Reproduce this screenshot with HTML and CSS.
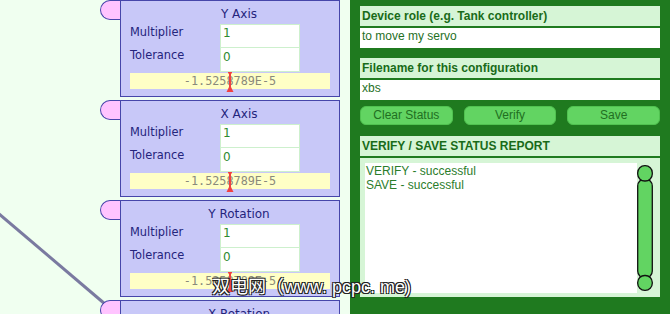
FILE: index.html
```html
<!DOCTYPE html>
<html>
	<head>
		<meta charset="utf-8">
		<title>Servo config</title>
		<link rel="stylesheet" href="styles.css">
	</head>
	<body>
		<div class="page">
			<div class="canvas">
				<svg class="wire" width="350" height="314"><line x1="-2" y1="213" x2="105" y2="304" stroke="#7a7aa0" stroke-width="3"/></svg>
				<div class="node">
					<div class="tab"></div>
					<div class="box">
						<div class="title">Y Axis</div>
						<div class="rows">
							<span class="lbl">Multiplier</span><div class="val">1</div>
							<span class="lbl lbl2">Tolerance</span><div class="val val2">0</div>
						</div>
						<div class="reading">-1.5258789E-5<svg class="marker" width="8" height="20"><rect x="2" y="0" width="4" height="1.5" fill="#f04040"/><rect x="3" y="0" width="2" height="19" fill="#f04040"/><polygon points="0.5,20 7.5,20 4,13" fill="#f04040"/></svg></div>
					</div>
				</div>
				<div class="node">
					<div class="tab"></div>
					<div class="box">
						<div class="title">X Axis</div>
						<div class="rows">
							<span class="lbl">Multiplier</span><div class="val">1</div>
							<span class="lbl lbl2">Tolerance</span><div class="val val2">0</div>
						</div>
						<div class="reading">-1.5258789E-5<svg class="marker" width="8" height="20"><rect x="2" y="0" width="4" height="1.5" fill="#f04040"/><rect x="3" y="0" width="2" height="19" fill="#f04040"/><polygon points="0.5,20 7.5,20 4,13" fill="#f04040"/></svg></div>
					</div>
				</div>
				<div class="node">
					<div class="tab"></div>
					<div class="box">
						<div class="title">Y Rotation</div>
						<div class="rows">
							<span class="lbl">Multiplier</span><div class="val">1</div>
							<span class="lbl lbl2">Tolerance</span><div class="val val2">0</div>
						</div>
						<div class="reading">-1.5258789E-5<svg class="marker" width="8" height="20"><rect x="2" y="0" width="4" height="1.5" fill="#f04040"/><rect x="3" y="0" width="2" height="19" fill="#f04040"/><polygon points="0.5,20 7.5,20 4,13" fill="#f04040"/></svg></div>
					</div>
				</div>
				<div class="node">
					<div class="tab"></div>
					<div class="box">
						<div class="title">X Rotation</div>
						<div class="rows">
							<span class="lbl">Multiplier</span><div class="val">1</div>
							<span class="lbl lbl2">Tolerance</span><div class="val val2">0</div>
						</div>
					</div>
				</div>
			</div>
			<div class="panel">
				<div class="field-label">Device role (e.g. Tank controller)</div>
				<div class="field">to move my servo</div>
				<div class="field-label gap">Filename for this configuration</div>
				<div class="field">xbs</div>
				<div class="buttons">
					<button class="btn">Clear Status</button>
					<button class="btn">Verify</button>
					<button class="btn">Save</button>
				</div>
				<div class="field-label report">VERIFY / SAVE STATUS REPORT</div>
				<div class="status">
					<div class="log">VERIFY - successful<br>SAVE - successful</div>
					<svg class="scroll" width="16" height="126">
						<rect x="0.7" y="14" width="14.6" height="99" rx="7" fill="#62d462" stroke="#111" stroke-width="1.3"/>
						<rect x="0.7" y="0.7" width="14.6" height="15.3" rx="7" fill="#62d462" stroke="#111" stroke-width="1.3"/>
						<rect x="0.7" y="110.5" width="14.6" height="14.8" rx="7" fill="#62d462" stroke="#111" stroke-width="1.3"/>
					</svg>
				</div>
			</div>
		</div>
		<div class="watermark">双电网（www. pcpc. me)</div>
	</body>
</html>
```

FILE: styles.css
```css
body{
	margin: 0;
	background-color: #f0fff0;
	overflow: hidden;
}
.page{
	display: flex;
	height: 314px;
	overflow: hidden;
}
.canvas{
	position: relative;
	z-index: 0;
	width: 350px;
	box-sizing: border-box;
	padding-left: 100px;
	display: flex;
	flex-direction: column;
	gap: 3px;
}
.wire{
	position: absolute;
	left: 0;
	top: 0;
	z-index: -1;
}
.node{
	display: flex;
	align-items: flex-start;
	flex-shrink: 0;
}
.tab{
	width: 19px;
	height: 18px;
	background-color: #ffc4ff;
	border: 1px solid #4646aa;
	border-right: 0;
	border-radius: 10px 0 0 10px;
}
.box{
	width: 220px;
	height: 97px;
	box-sizing: border-box;
	background-color: #c8c8f8;
	border: 1px solid #4646aa;
	font-family: "DejaVu Sans", sans-serif;
	color: #24247c;
}
.title{
	height: 23px;
	box-sizing: border-box;
	padding: 6px 0 0 18px;
	font-size: 12px;
	line-height: 14px;
	text-align: center;
}
.rows{
	display: grid;
	grid-template-columns: 90px 80px;
	margin-left: 9px;
}
.lbl{
	font-size: 11.4px;
	line-height: 14px;
	padding-top: 1px;
}
.lbl2{padding-top: 0;}
.val{
	height: 24px;
	box-sizing: border-box;
	background-color: #fff;
	border: 1px solid #cdf0cd;
	padding: 1px 0 0 2px;
	color: #2f8a2f;
	font-size: 12px;
	line-height: 14px;
}
.val2{
	border-top: 0;
	padding-top: 2px;
}
.reading{
	position: relative;
	width: 200px;
	height: 16px;
	margin: 1px 0 0 9px;
	background-color: #ffffc6;
	font-family: "DejaVu Sans Mono", monospace;
	font-size: 11.8px;
	line-height: 16px;
	color: #8a8a7a;
	text-align: center;
}
.marker{
	position: absolute;
	left: 96px;
	top: -1px;
}
.panel{
	width: 320px;
	box-sizing: border-box;
	padding: 6px 10px 0;
	background-color: #1f7a1f;
	font-family: "Liberation Sans", Arial, sans-serif;
	font-size: 12px;
	display: flex;
	flex-direction: column;
}
.field-label{
	height: 20px;
	line-height: 20px;
	padding-left: 2px;
	background-color: #d6f5d6;
	color: #196b19;
	font-weight: bold;
}
.field-label.gap{margin-top: 10px;}
.field-label.report{margin-top: 11px;}
.field{
	height: 20px;
	box-sizing: border-box;
	margin-top: 2px;
	padding: 0 2px;
	line-height: 16px;
	background-color: #fff;
	color: #1f701f;
}
.buttons{
	display: grid;
	grid-template-columns: repeat(3, 1fr);
	gap: 11px;
	height: 19px;
	margin-top: 6px;
}
.btn{
	margin: 0;
	padding: 0;
	background-color: #62d462;
	border: 1px solid #50c250;
	border-radius: 6px;
	color: #216f21;
	font-family: inherit;
	font-size: 12px;
	line-height: 17px;
}
.status{
	display: flex;
	height: 139px;
	box-sizing: border-box;
	margin-top: 2px;
	padding: 5px 7px 4px 5px;
	background-color: #d6f5d6;
}
.log{
	flex: 1;
	padding: 1px 1px;
	background-color: #fff;
	color: #2b7d2b;
	line-height: 14px;
}
.scroll{
	margin-top: 2px;
	flex-shrink: 0;
}
.watermark{
	position: absolute;
	left: 212px;
	top: 277px;
	font-family: "Liberation Sans", "Noto Sans CJK SC", sans-serif;
	font-size: 18px;
	line-height: 20px;
	color: #fff;
	text-shadow: 1px 1px 0 #222, -1px -1px 0 #222, 1px -1px 0 #222, -1px 1px 0 #222;
}
```
